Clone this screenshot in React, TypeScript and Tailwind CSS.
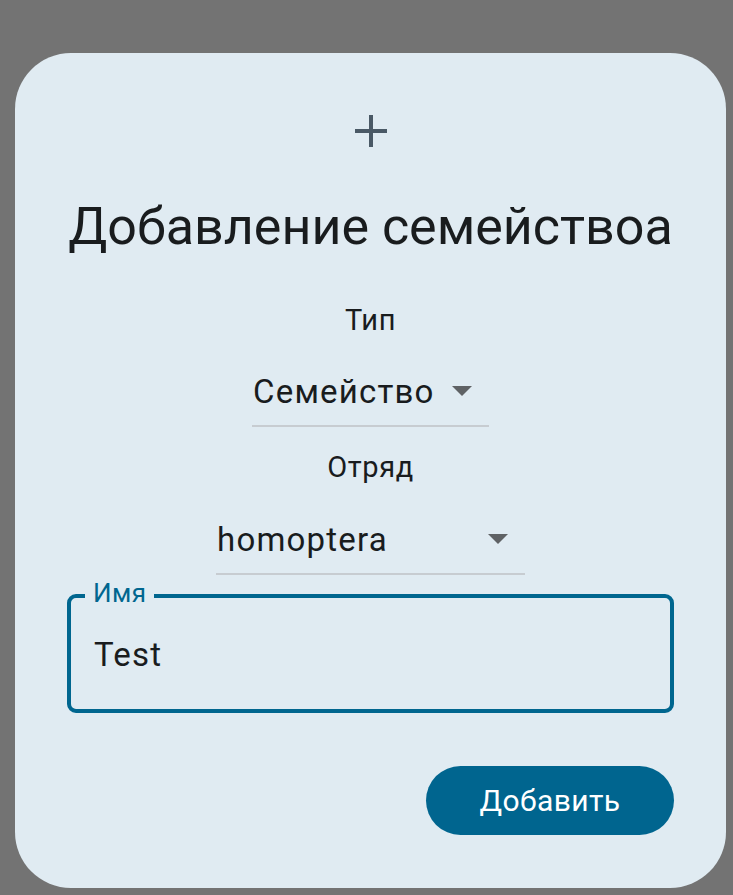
import React from 'react';

function Caret() {
  return (
    <svg width="20" height="10" viewBox="0 0 20 10" className="shrink-0">
      <path d="M0 0 L20 0 L10 10 Z" fill="#5f6265" />
    </svg>
  );
}

function Dropdown({ value, width }: { value: string; width: string }) {
  return (
    <div className={`${width} h-[70px] flex items-center justify-between pl-px pr-[17px] border-b-2 border-[#c7ccd1]`}>
      <span className="text-[33px] leading-none tracking-[1.2px] text-[#191c1e]">{value}</span>
      <Caret />
    </div>
  );
}

export default function App() {
  return (
    <div
      className="w-[733px] h-[895px] bg-[#737373] pt-[53px] pl-[15px]"
      style={{ fontFamily: 'Roboto, "Noto Sans", sans-serif' }}
    >
      <div className="w-[711px] h-[835px] rounded-[56px] bg-[#e0ebf2] flex flex-col items-center">
        {/* icon */}
        <svg width="32" height="32" viewBox="0 0 32 32" className="mt-[62px]">
          <path d="M16 0 V32 M0 16 H32" stroke="#4a5966" strokeWidth="4" />
        </svg>

        <h1 className="mt-[52px] h-[56px] flex items-center text-[52px] leading-none text-[#191c1e]">
          Добавление семействоа
        </h1>

        <div className="mt-[45px] h-[40px] flex items-center text-[29px] leading-none tracking-[0.6px] text-[#191c1e]">Тип</div>
        <div className="mt-[17px]">
          <Dropdown value="Семейство" width="w-[237px]" />
        </div>

        <div className="mt-[20px] h-[40px] flex items-center text-[29px] leading-none tracking-[0.6px] text-[#191c1e]">Отряд</div>
        <div className="mt-[18px]">
          <Dropdown value="homoptera" width="w-[309px]" />
        </div>

        <div className="mt-[19px] self-stretch px-[52px]">
          <div className="relative h-[119px] rounded-[9px] border-4 border-[#00668f] flex items-center pl-[23px]">
            <span className="absolute -top-[22px] left-[14px] px-[8px] bg-[#e0ebf2] text-[26px] leading-[34px] tracking-[0.4px] text-[#00668f]">
              Имя
            </span>
            <span className="text-[33px] leading-none tracking-[1.2px] text-[#191c1e] mt-[2px]">Test</span>
          </div>
        </div>

        <div className="mt-[53px] self-stretch flex justify-end pr-[52px]">
          <button className="w-[248px] h-[69px] rounded-full bg-[#00658f] text-white text-[30px] font-normal tracking-[0.4px] leading-none">
            Добавить
          </button>
        </div>
      </div>
    </div>
  );
}
